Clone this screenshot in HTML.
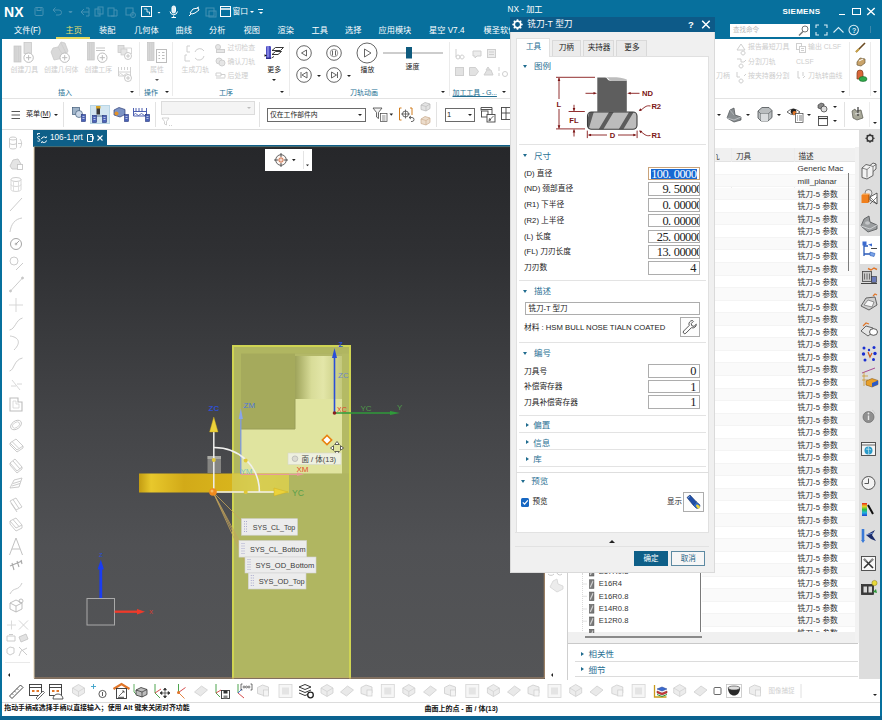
<!DOCTYPE html>
<html lang="zh-CN">
<head>
<meta charset="utf-8">
<title>NX - 加工</title>
<style>
*{box-sizing:border-box;margin:0;padding:0}
html,body{width:882px;height:720px;overflow:hidden;background:#07709d}
body{position:relative;font-family:"Liberation Sans","Noto Sans CJK SC",sans-serif;font-size:8px;color:#222;line-height:1}
.a{position:absolute}
.t{position:absolute;white-space:nowrap}
/* frame */
#titlebar{left:0;top:0;width:882px;height:39px;background:#07709d}
#ribbon{left:2px;top:39px;width:878px;height:59px;background:#fff}
#tb2{left:2px;top:98px;width:878px;height:32px;background:#fff;border-top:1px solid #e3e3e3}
#tabrow{left:2px;top:130px;width:878px;height:16px;background:#fff}
#leftbar{left:2px;top:146px;width:31px;height:534px;background:#fff}
#view{left:34px;top:146px;width:511px;height:532.500px;background:linear-gradient(180deg,#26272a 0%,#2f3033 20%,#434447 50%,#505154 75%,#545557 100%)}
#rpanel{left:546px;top:130px;width:313px;height:550px;background:#fff}
#rstrip{left:859px;top:130px;width:21px;height:548.500px;background:#dddddd}
#btb{left:2px;top:680px;width:878px;height:22px;background:#fff}
#status{left:2px;top:701.500px;width:878px;height:14px;background:#fff;border-top:1px solid #dcdcdc}
.menu{color:#fff;font-size:8.200px;top:26.500px}
.gl{color:#1b6a8c;font-size:8px;top:88px}
.dis{color:#c4c4c4}
</style>
</head>
<body>
<div class="a" id="titlebar"></div>
<div class="a" style="left:2px;top:39px;width:878px;height:677px;background:#fff"></div>
<div class="a" id="ribbon"></div>
<div class="a" id="tb2"></div>
<div class="a" id="tabrow"></div>
<div class="a" id="leftbar"></div>
<div class="a" id="view"></div>
<div class="a" id="rpanel"></div>
<div class="a" id="rstrip"></div>
<div class="a" id="btb"></div>
<div class="a" id="status"></div>

<!-- title bar -->
<div class="t" style="left:4px;top:5px;font-size:14px;font-weight:bold;color:#fff;letter-spacing:0.2px">NX</div>
<svg class="a" style="left:30px;top:4px" width="240" height="16" viewBox="0 0 240 16" fill="none" stroke="#4591b3" stroke-width="1">
 <rect x="5" y="3.5" width="8" height="8" rx="1"/><rect x="7" y="3.5" width="4" height="3"/>
 <path d="M23 6h6a2.5 2.500 0 0 1 0 5h-3M23 6l2.500-2.500M23 6l2.500 2.500"/>
 <path d="M39 7.500l1.500 1.500l1.500-1.500z" fill="#4f93b3"/>
 <path d="M52 8h7M54 5l-3 3l3 3M56 4h3v8h-3"/>
 <rect x="65" y="5" width="5" height="7"/><rect x="68" y="3" width="5" height="7"/>
 <rect x="78" y="4" width="6" height="8"/><path d="M84 6h3v6h-6"/>
 <rect x="96" y="4" width="7" height="7"/><circle cx="103" cy="11" r="2.500"/>
 <rect x="176" y="4" width="8" height="8"/><rect x="179" y="7" width="7" height="6"/>
</svg>
<svg class="a" style="left:140px;top:4px" width="130" height="16" viewBox="0 0 130 16" fill="none" stroke="#fff" stroke-width="1">
 <rect x="1.500" y="2.500" width="10" height="10"/><path d="M4 5h3v3M7 8h2.500v2.500" stroke-width="0.800"/>
 <path d="M17.500 8l1.500 1.600l1.500-1.600z" fill="#fff" stroke="none"/>
 <rect x="32" y="2" width="3.500" height="7" rx="1.700" fill="#dfeef5"/><path d="M30 7.500a3.800 3.800 0 0 0 7.500 0M33.700 11.500v2M31.500 13.500h4.500"/>
 <path d="M50 9l3-4l5-1l1 2l-4 3l-3 1zM51 10l-2 2M57 4l2-1" />
 <rect x="80.500" y="2.500" width="10" height="10"/><path d="M80.500 5h10" stroke-width="1.500"/>
</svg>
<div class="t" style="left:232.500px;top:8px;font-size:7.800px;color:#fff">窗口</div>
<div class="a" style="left:250px;top:11px;border:2px solid transparent;border-top:2.500px solid #fff"></div>
<div class="a" style="left:258px;top:9px;width:5px;height:1px;background:#fff"></div>
<div class="a" style="left:258.500px;top:11.500px;border:2px solid transparent;border-top:2.500px solid #fff"></div>
<div class="t" style="left:507.500px;top:6px;font-size:8.200px;color:#fff">NX - 加工</div>
<div class="t" style="left:782.500px;top:8px;font-size:8px;font-weight:bold;color:#fff;letter-spacing:0.250px">SIEMENS</div>
<div class="a" style="left:838.500px;top:13.500px;width:6px;height:1.200px;background:#fff"></div>
<div class="a" style="left:852px;top:8px;width:8.500px;height:7px;border:1.200px solid #fff;border-top-width:1.800px"></div>
<svg class="a" style="left:866px;top:7px" width="10" height="9" viewBox="0 0 10 9" stroke="#fff" stroke-width="1.400"><path d="M1.200 1l7.500 7M8.700 1l-7.500 7"/></svg>
<!-- menu -->
<div class="t menu" style="left:14px">文件(F)</div>
<div class="t menu" style="left:65.500px;color:#eadf6e">主页</div>
<div class="a" style="left:56px;top:37px;width:34px;height:1.500px;background:#e4d75c"></div>
<div class="t menu" style="left:99px">装配</div>
<div class="t menu" style="left:134px">几何体</div>
<div class="t menu" style="left:175.500px">曲线</div>
<div class="t menu" style="left:209px">分析</div>
<div class="t menu" style="left:243.500px">视图</div>
<div class="t menu" style="left:277.500px">渲染</div>
<div class="t menu" style="left:311.500px">工具</div>
<div class="t menu" style="left:345px">选择</div>
<div class="t menu" style="left:378.500px">应用模块</div>
<div class="t menu" style="left:429px">星空 V7.4</div>
<div class="t menu" style="left:483.500px">模圣软件</div>
<!-- search -->
<div class="a" style="left:730px;top:24px;width:80px;height:13px;background:#fff"></div>
<div class="t" style="left:733px;top:27px;font-size:6.500px;color:#b9b9b9">查找命令</div>
<svg class="a" style="left:797px;top:24px" width="13" height="13" viewBox="0 0 13 13" fill="none" stroke="#777" stroke-width="1"><circle cx="8" cy="5" r="3"/><path d="M6 7.500l-4 4" stroke-width="1.500"/></svg>
<svg class="a" style="left:814px;top:23px" width="50" height="14" viewBox="0 0 50 14" fill="none" stroke="#d9ecf4" stroke-width="1.100">
 <path d="M2 5v-3h3M10 2h3v3M13 9v3h-3M5 12h-3v-3"/>
 <path d="M19.500 9.500l5-5l5 5"/>
 <circle cx="39.700" cy="7" r="4.700"/>
</svg>
<div class="t" style="left:852px;top:26.500px;font-size:7px;color:#d9ecf4;font-weight:bold">?</div>
<div class="a" style="left:870px;top:26px;width:1px;height:7px;background:#3f88aa"></div>


<!-- ribbon -->
<style>
.rl{font-size:6.900px;color:#cdcdcd;top:66.800px}
.rs{font-size:6.900px;color:#cdcdcd;margin-top:0.300px}
.gl{font-size:7px;color:#236f92;top:89.200px}
.vs{width:1px;background:#ebebeb;top:42px;height:54px}
.dd{border:2px solid transparent;border-top:2.500px solid #222;width:0;height:0}
</style>
<svg class="a" style="left:2px;top:39px" width="878" height="59" viewBox="2 39 878 59" fill="none" stroke="#cfcfcf" stroke-width="1">
 <!-- 创建刀具 -->
 <rect x="14" y="46" width="7" height="16" fill="#d6d6d6" stroke="#c4c4c4" stroke-width="0.700"/><path d="M16 46v16M18.500 46v16" stroke="#c9c9c9" stroke-width="0.500"/><rect x="24" y="42.500" width="7.500" height="11" fill="#dedede" stroke="#c4c4c4" stroke-width="0.700"/><circle cx="28.600" cy="57.700" r="4.700" fill="#fff" stroke="#bdbdbd"/><path d="M26 57.700h5.200M28.600 55.100v5.200" stroke="#bdbdbd"/>
 <!-- 创建几何体 -->
 <path d="M51 52l2-4l5-1l3-5l4 1l3 8l-4 7l-10 2z" fill="#d9d9d9" stroke="#c6c6c6" stroke-width="0.700"/><path d="M58 47l6 10M61 43l5 10" stroke="#c9c9c9" stroke-width="0.600"/><circle cx="64.700" cy="57.700" r="4.700" fill="#fff" stroke="#bdbdbd"/><path d="M62.100 57.700h5.200M64.700 55.100v5.200" stroke="#bdbdbd"/>
 <!-- 创建工序 -->
 <rect x="87.500" y="42.500" width="6.700" height="17.500" fill="#d6d6d6" stroke="#c4c4c4" stroke-width="0.700"/><path d="M89.500 42.500v17.500M91.800 42.500v17.500" stroke="#c9c9c9" stroke-width="0.500"/><path d="M96 48h9M96 50.500h9" stroke="#c4c4c4"/><circle cx="102.300" cy="57.700" r="4.700" fill="#fff" stroke="#bdbdbd"/><path d="M99.700 57.700h5.200M102.300 55.100v5.200" stroke="#bdbdbd"/>
 <!-- small -->
 <rect x="118" y="45.500" width="6" height="7" fill="#e0e0e0" stroke="#c6c6c6" stroke-width="0.700"/><path d="M124 48h7.500v6" stroke="#c6c6c6" stroke-width="0.700"/><rect x="121" y="49" width="6" height="6" fill="#e6e6e6" stroke="#c6c6c6" stroke-width="0.600"/><circle cx="128" cy="56" r="3.500" fill="#fff" stroke="#bdbdbd" stroke-width="0.800"/><path d="M126 56h4M128 54v4" stroke="#bdbdbd" stroke-width="0.800"/>
 <path d="M118.500 67v9h12v-9M118.500 72h12M121.500 67v3M124.500 67v3M127.500 67v3" stroke="#c6c6c6" stroke-width="0.800"/><path d="M119 74.500q1.500-2 3 0t3 0t3 0" stroke="#c6c6c6" stroke-width="0.700"/><circle cx="128" cy="78" r="3.500" fill="#fff" stroke="#bdbdbd" stroke-width="0.800"/><path d="M126 78h4M128 76v4" stroke="#bdbdbd" stroke-width="0.800"/>
 <!-- 属性 -->
 <rect x="147.500" y="42.500" width="6.500" height="18" fill="#d6d6d6" stroke="#c4c4c4" stroke-width="0.700"/><path d="M149.500 42.500v18M151.800 42.500v18" stroke="#c9c9c9" stroke-width="0.500"/><rect x="156.500" y="49.500" width="10" height="13" fill="#fff" stroke="#bdbdbd"/><path d="M158.500 52.500h1.500M162 52.500h2.500M158.500 55.500h1.500M162 55.500h2.500M158.500 58.500h1.500M162 58.500h2.500" stroke="#bdbdbd"/>
 <!-- 生成刀轨 -->
 <path d="M190 46h-3v6h3M187 55h-2v6h5M195 52a5 5 0 0 1 9-1M204 56a5 5 0 0 1 -9 2"/>
 <!-- small gen icons -->
 <circle cx="218" cy="47" r="2.500" fill="#e6e6e6"/><rect x="216.500" y="49.500" width="8" height="3" fill="#e6e6e6"/>
 <circle cx="219" cy="61" r="3" fill="#e6e6e6"/><circle cx="222" cy="63" r="3" fill="#e6e6e6"/>
 <path d="M216 73h5v3h-5zM216 78h9M221 74.500h4v3"/>
 <!-- playback circles -->
 <g stroke="#555" stroke-width="0.900">
 <circle cx="304" cy="53" r="7.300"/><path d="M306.500 50l-5 3l5 3z"/>
 <circle cx="334" cy="53" r="7.300"/><path d="M332.500 50.500v5M335.500 50.500v5"/><circle cx="334" cy="53" r="3.800" stroke-width="0.600"/>
 <circle cx="367" cy="53" r="10"/><path d="M364.500 49l6.500 4l-6.500 4z"/>
 <circle cx="304" cy="75" r="7.300"/><path d="M307 72l-5 3l5 3zM301 72v6"/>
 <circle cx="334" cy="75" r="7.300"/><path d="M331.500 72l5 3l-5 3zM337.500 72v6"/>
 </g>
 <path d="M383 53h60" stroke="#bdbdbd" stroke-width="1.500"/>
 <rect x="406.500" y="47.500" width="5" height="10.500" fill="#0f5b7e" stroke="#0f5b7e"/>
 <!-- group5 disabled icons -->
 <path d="M456 49v8M456 57a2 2 0 1 0 4 0a2 2 0 1 0 -4 0M462 55a2 2 0 1 0 0.100 0"/>
 <path d="M473 51h8v5h-4l-2 2v-2h-2z" fill="#ececec"/>
 <rect x="487.500" y="49.500" width="8" height="8" fill="#ececec"/><path d="M489 52h5M489 54.500h5"/>
 <rect x="455.500" y="67.500" width="8" height="8" fill="#e2e2e2"/>
 <path d="M469.500 67.500h6l3 4l-3 4h-6z" fill="#e2e2e2"/>
 <path d="M484 75h9l-2-5h-4zM486 70l2-3l2 3" fill="#e2e2e2"/>
 <path d="M499 67v4M499 73v3"/><circle cx="505" cy="74" r="2.500"/>
 <!-- right groups -->
 <path d="M737 50l4-6l4 6zM743 51a2 2 0 1 0 0.100 0"/>
 <path d="M737 59h4v3h3M741 64a2 2 0 1 0 0.100 0M744 62l2-2"/>
 <path d="M737 72v5h3M741 79a2 2 0 1 0 0.100 0M744 76l2-2"/>
 <rect x="796.500" y="43.500" width="5" height="6"/><rect x="799.500" y="46.500" width="6" height="6" fill="#fff"/><path d="M801 48.500h3M801 50.500h3"/>
 <path d="M798 71v7M798 78h2M803 72v4M803 78l2-2"/>
</svg>
<div class="t rl" style="left:10.500px">创建刀具</div>
<div class="t rl" style="left:44px">创建几何体</div>
<div class="t rl" style="left:84.500px">创建工序</div>
<div class="t rl" style="left:150px">属性</div>
<div class="a dd" style="left:155px;top:78.500px;border-top-color:#555"></div>
<div class="t rl" style="left:181.500px">生成刀轨</div>
<div class="t rs" style="left:227.500px;top:45px">过切检查</div>
<div class="t rs" style="left:227.500px;top:58.500px">确认刀轨</div>
<div class="t rs" style="left:227.500px;top:72.500px">后处理</div>
<!-- 更多 icon -->
<svg class="a" style="left:264px;top:44px" width="22" height="19" viewBox="264 44 22 19">
 <rect x="266" y="46" width="5" height="13" rx="1.200" fill="#4c4cc0"/><rect x="267.200" y="46" width="1.600" height="13" fill="#8c8ce6"/><rect x="266" y="57.500" width="5" height="1.500" fill="#2c2c8a"/>
 <path d="M267 55.500l-2.500-1.200v2.400z" fill="#111"/>
 <path d="M283.500 47.500h-8l-3.500 3h8.500zM281.500 51.500h-6l-3.500 3h6z" fill="#fff" stroke="#222" stroke-width="0.900"/>
 <path d="M274 56.500l-2.500 1.500" stroke="#222" stroke-width="0.900"/>
</svg>
<div class="t" style="left:267.300px;top:66.800px;font-size:6.900px;color:#222">更多</div>
<div class="a dd" style="left:272px;top:79px"></div>
<div class="t" style="left:360.500px;top:66.800px;font-size:6.900px;color:#222">播放</div>
<div class="a dd" style="left:317px;top:74.500px"></div>
<div class="a dd" style="left:347px;top:74.500px"></div>
<div class="t" style="left:405.500px;top:62.800px;font-size:7px;color:#222">速度</div>
<!-- group labels -->
<div class="t gl" style="left:58px">插入</div><div class="a dd" style="left:130px;top:91px"></div>
<div class="t gl" style="left:144px">操作</div><div class="a dd" style="left:165px;top:91px"></div>
<div class="t gl" style="left:219px">工序</div><div class="a dd" style="left:280px;top:91px"></div>
<div class="t gl" style="left:350px">刀轨动画</div><div class="a dd" style="left:440.500px;top:91px"></div>
<div class="t gl" style="left:452.500px;text-decoration:underline;letter-spacing:-0.100px">加工工具 - G...</div><div class="a dd" style="left:502px;top:91px"></div>
<div class="a vs" style="left:139px"></div>
<div class="a vs" style="left:172px"></div>
<div class="a vs" style="left:289px"></div>
<div class="a vs" style="left:449px"></div>
<div class="a vs" style="left:849px"></div>
<div class="a vs" style="left:870px"></div>
<!-- right ribbon text -->
<div class="t rs" style="left:716px;top:72.500px">刀柄</div>
<div class="t rs" style="left:748px;top:43.500px">报告最短刀具</div>
<div class="t rs" style="left:748px;top:58.500px">分割刀轨</div>
<div class="t rs" style="left:748px;top:72.500px">按夹持器分割</div>
<div class="t rs" style="left:808px;top:43.500px">输出 CLSF</div>
<div class="t rs" style="left:796px;top:58.500px">CLSF</div>
<div class="t rs" style="left:808px;top:72.500px">刀轨转曲线</div>
<div class="a dd" style="left:840.500px;top:91px"></div>
<div class="a dd" style="left:872.500px;top:91px"></div>
<svg class="a" style="left:854px;top:41px" width="14" height="42" viewBox="0 0 14 42">
 <path d="M2 11l9-9" stroke="#6b4a22" stroke-width="1.600"/><path d="M2 11l3-3" stroke="#c8a24a" stroke-width="2"/>
 <path d="M3 21l3-4l5 1v4l-4 3l-4-1z" fill="#c9a36a" stroke="#6b5a3a" stroke-width="0.700"/><path d="M5 20l4-2" stroke="#fff" stroke-width="1"/>
 <path d="M3 32v6h6v-6a3 3 0 0 0-6 0z" fill="#d9673a" stroke="#7a3a1a" stroke-width="0.700"/><ellipse cx="9" cy="38" rx="4" ry="2.500" fill="#2fa84a" stroke="#146a26" stroke-width="0.600"/>
</svg>


<!-- toolbar 2 -->
<svg class="a" style="left:11px;top:110px" width="10" height="10" viewBox="0 0 10 10" stroke="#444" stroke-width="0.900"><path d="M0.500 1.500h8.500M0.500 5h8.500M0.500 8.500h8.500"/></svg>
<div class="t" style="left:26px;top:111.300px;font-size:7.100px;color:#222">菜单(<u>M</u>)</div>
<div class="a dd" style="left:54px;top:114px"></div>
<div class="a" style="left:63px;top:102px;width:1px;height:25px;background:#e2e2e2"></div>
<div class="a" style="left:89.500px;top:104.500px;width:20px;height:19.500px;background:#d3e6f1;border:1px solid #b9d6e6"></div>
<svg class="a" style="left:70px;top:104px" width="84" height="21" viewBox="70 104 84 21">
 <!-- icon1 -->
 <rect x="72.500" y="107.500" width="7" height="7" fill="#9fb3c8" stroke="#3f5a78" stroke-width="0.700"/><circle cx="79" cy="114" r="3.500" fill="#c9d6e6" stroke="#3f5a78" stroke-width="0.700"/><rect x="81.500" y="114.500" width="4" height="7" fill="#4a63b8" stroke="#26357a" stroke-width="0.600"/><path d="M82.500 116.500h2M82.500 118.500h2" stroke="#fff" stroke-width="0.600"/>
 <!-- icon2 -->
 <rect x="96.500" y="106.500" width="3.500" height="8" fill="#3a3a3a"/><rect x="96" y="106" width="4.500" height="2.500" fill="#d8a326"/><path d="M94 116h10" stroke="#3f5a78" stroke-width="0.800"/><rect x="92.500" y="115.500" width="4" height="7" fill="#4a63b8" stroke="#26357a" stroke-width="0.600"/><rect x="102.500" y="115.500" width="4" height="7" fill="#4a63b8" stroke="#26357a" stroke-width="0.600"/><path d="M93.500 117.500h2M93.500 119.500h2M103.500 117.500h2M103.500 119.500h2" stroke="#fff" stroke-width="0.600"/>
 <!-- icon3 -->
 <path d="M114 110l5-2.500l6 2v5l-5 2.500l-6-2z" fill="#7c93c4" stroke="#2f3f78" stroke-width="0.700"/><circle cx="116.500" cy="113.500" r="2" fill="#e0902a"/><rect x="124.500" y="114.500" width="4" height="7" fill="#4a63b8" stroke="#26357a" stroke-width="0.600"/><path d="M125.500 116.500h2M125.500 118.500h2" stroke="#fff" stroke-width="0.600"/>
 <!-- icon4 -->
 <path d="M133.500 108v8h13v-8M133.500 111.500h13M136 108v3.500M139 108v3.500M142 108v3.500" fill="none" stroke="#3a4fa8" stroke-width="0.900"/><path d="M134 114.500q1.500-2 3 0t3 0t3 0t3 0" fill="none" stroke="#3a4fa8" stroke-width="0.800"/><rect x="145.500" y="114.500" width="4" height="7" fill="#4a63b8" stroke="#26357a" stroke-width="0.600"/><path d="M146.500 116.500h2M146.500 118.500h2" stroke="#fff" stroke-width="0.600"/>
</svg>
<div class="a" style="left:155px;top:102px;width:1px;height:25px;background:#e2e2e2"></div>
<div class="a" style="left:161px;top:101px;width:94px;height:14px;background:#f4f4f4;border:1px solid #dcdcdc"></div>
<div class="a dd" style="left:247px;top:107px;border-top-color:#bbb"></div>
<svg class="a" style="left:161px;top:117px" width="12" height="11" viewBox="0 0 12 11" fill="none" stroke="#c8c8c8" stroke-width="0.800"><path d="M1 1h7l-2.500 3.500v3.500l-2-1v-2.500z"/><path d="M8 8.500h1M10 8.500h1"/></svg>
<div class="a" style="left:259px;top:102px;width:1px;height:25px;background:#e2e2e2"></div>
<div class="a" style="left:267px;top:108px;width:99px;height:14px;background:#fff;border:1px solid #6a6a6a"></div>
<div class="t" style="left:270px;top:111.500px;font-size:6.800px;color:#222">仅在工作部件内</div>
<div class="a dd" style="left:358px;top:114px"></div>
<svg class="a" style="left:372px;top:106px" width="46" height="18" viewBox="372 106 46 18" fill="none">
 <path d="M373 108h9l-3.500 4.500v6l-2-1.500v-4.500z" stroke="#444" stroke-width="0.800" fill="#f2f2f2"/>
 <rect x="380.500" y="113.500" width="6.500" height="8" fill="#fff" stroke="#444" stroke-width="0.700"/><path d="M382 116h3.500M382 118h3.500M382 120h3.500" stroke="#444" stroke-width="0.600"/>
 <path d="M389.500 113.500l1.800 2.200l1.800-2.200z" fill="#222"/>
 <path d="M401.500 108h-2v12h2M410 108h2v7" stroke="#d07a1a" stroke-width="1"/>
 <circle cx="405.500" cy="114" r="3" stroke="#444" stroke-width="0.800"/><path d="M405.500 109.500v9M401 114h9" stroke="#444" stroke-width="0.700"/>
 <path d="M409 117.500h3a2 2 0 0 1 0 4h-1M409 117.500l2-1.500M409 117.500l2 1.500" stroke="#444" stroke-width="0.800"/>
</svg>
<svg class="a" style="left:419px;top:101px" width="13" height="26" viewBox="0 0 13 26">
 <path d="M2 4l4-2.500l5 1.500v4.500l-4 2.500l-5-1.500z" fill="#e3e3e3" stroke="#b5b5b5" stroke-width="0.700"/><path d="M2 4l5 1.500l4-2.500M7 5.500v4.500" fill="none" stroke="#b5b5b5" stroke-width="0.600"/>
 <path d="M2 18l4-2.500l5 1.500v4.500l-4 2.500l-5-1.500z" fill="#ecdccb" stroke="#c9a98a" stroke-width="0.700"/><path d="M2 18l5 1.500l4-2.500M7 19.500v4.500" fill="none" stroke="#c9a98a" stroke-width="0.600"/>
</svg>
<div class="a" style="left:436px;top:102px;width:1px;height:25px;background:#e2e2e2"></div>
<div class="a" style="left:444.500px;top:108px;width:30px;height:13.500px;background:#fff;border:1px solid #6a6a6a"></div>
<div class="t" style="left:447px;top:111px;font-size:7.500px;color:#222">1</div>
<div class="a dd" style="left:467.500px;top:114px"></div>
<svg class="a" style="left:480px;top:106px" width="32" height="18" viewBox="480 106 32 18" fill="none" stroke="#444" stroke-width="0.900">
 <path d="M481 110.500v-3h11v8h-2M481 109.500h11"/><rect x="481.500" y="111" width="6.500" height="6"/><rect x="487" y="114.500" width="8" height="7.500" fill="#fff"/><path d="M489 120.500l4.500-4.500M489 120.500l0.500-2l1.500 1.500z" stroke-width="0.800"/>
 <rect x="501.500" y="107.500" width="9" height="12"/><path d="M501.500 113h9M506 107.500v12"/>
</svg>
<!-- right part of tb2 -->
<div class="a dd" style="left:717px;top:113.500px"></div>
<svg class="a" style="left:725px;top:105px" width="18" height="18" viewBox="0 0 18 18"><path d="M2 13l3-8l4-2l1 7l6 2v3l-7 2z" fill="#8a8f92" stroke="#4a4f52" stroke-width="0.700"/><path d="M2 13l7 2l7-3" fill="none" stroke="#c9cdd0" stroke-width="0.800"/><path d="M5 5l4 5" stroke="#c9cdd0" stroke-width="0.600"/></svg>
<div class="a dd" style="left:746px;top:113.500px"></div>
<svg class="a" style="left:756px;top:105px" width="18" height="18" viewBox="0 0 18 18"><path d="M2 6l4-3.500h7l3 3v7l-4 3.500h-7l-3-3z" fill="#b9bdbf" stroke="#4a4f52" stroke-width="0.800"/><path d="M2 6l3 3h7l4-3.500M5 9v7M12 9v7" fill="none" stroke="#5a5f62" stroke-width="0.700"/><path d="M5 9h7v7h-7z" fill="#d9dcde" stroke="none"/></svg>
<div class="a dd" style="left:777px;top:113.500px"></div>
<svg class="a" style="left:786px;top:105px" width="19" height="19" viewBox="0 0 19 19"><path d="M1 7q6-6 13 0q-6 5.500-13 0z" fill="#fff" stroke="#444" stroke-width="0.800"/><circle cx="7.500" cy="6.500" r="2.800" fill="#222"/><circle cx="8.500" cy="8" r="2" fill="#e0762a"/><rect x="9.500" y="8.500" width="7.500" height="9" fill="#fff" stroke="#444" stroke-width="0.700"/><path d="M11 11h1M13 11h3M11 13h1M13 13h3M11 15h1M13 15h3" stroke="#444" stroke-width="0.700"/></svg>
<div class="a dd" style="left:807px;top:113.500px"></div>
<svg class="a" style="left:816px;top:101px" width="13" height="26" viewBox="0 0 13 26"><path d="M2 4l3-2l3 1v3l-3 2l-3-1z" fill="#888" stroke="#333" stroke-width="0.600"/><circle cx="8" cy="8" r="3" fill="#ddd" stroke="#333" stroke-width="0.700"/><rect x="2.500" y="15.500" width="9" height="9" fill="#fff" stroke="#333" stroke-width="0.800"/><path d="M2.500 17.500h9" stroke="#333" stroke-width="1.200"/></svg>
<div class="a dd" style="left:832.500px;top:106px"></div>
<div class="a dd" style="left:832.500px;top:119.500px"></div>
<div class="a" style="left:844px;top:102px;width:1px;height:25px;background:#e2e2e2"></div>
<svg class="a" style="left:850px;top:106px" width="15" height="16" viewBox="0 0 15 16"><path d="M2 5l3-2l1 2l5-1l2 8l-6 2l-4-2z" fill="#a9a99a" stroke="#55554a" stroke-width="0.700"/><path d="M8 1v9" stroke="#444" stroke-width="1.300"/><path d="M5 8l5-1" stroke="#eee" stroke-width="0.800"/></svg>
<div class="a dd" style="left:872.500px;top:122px"></div>
<div class="a" style="left:869px;top:102px;width:1px;height:25px;background:#ececec"></div>
<div class="a" style="left:2px;top:129px;width:878px;height:1px;background:#dcdcdc"></div>


<!-- tab row -->
<div class="a" style="left:33px;top:130px;width:74px;height:16px;background:#0e5f88"></div>
<div class="a" style="left:33px;top:145px;width:513px;height:1.500px;background:#0e5f88"></div>
<svg class="a" style="left:35px;top:131px" width="13" height="14" viewBox="0 0 13 14" fill="none" stroke="#fff" stroke-width="0.900"><path d="M5 2.500h-2.500v1.500M5 5.500c-3-1-3 2-1 2.500s1 3-1.500 2"/><path d="M6.500 8a2.500 2.500 0 0 1 4.500-1l0.500-1.500M11.500 9.500a2.500 2.500 0 0 1-4.500 1l-0.500 1.500" stroke-width="1"/></svg>
<div class="t" style="left:50px;top:133.500px;font-size:8.200px;color:#fff">106-1.prt</div>
<svg class="a" style="left:86px;top:133px" width="18" height="10" viewBox="0 0 18 10" fill="none" stroke="#fff" stroke-width="1"><path d="M1.500 1.500h5v7h-5z"/><path d="M4 3.500h3.500v3" stroke-width="0.800"/><path d="M11.500 2.500l5 5M16.500 2.500l-5 5" stroke-width="1.100"/></svg>


<!-- left bar -->
<svg class="a" style="left:2px;top:130px" width="31" height="550" viewBox="2 130 31 550" fill="none" stroke="#c6c6c6" stroke-width="0.900">
 <ellipse cx="13" cy="138.500" rx="3.500" ry="1.500"/><path d="M9.500 138.500v9a3.500 1.500 0 0 0 7 0v-9M9.500 143a3.500 1.500 0 0 0 7 0"/><path d="M20 139a7 7 0 0 1 0 9M18 143.500h4" stroke-width="0.800"/>
 <path d="M10 166l3-6l5-1l3 5l-1 5h-8z" fill="#e4e4e4"/><rect x="17.500" y="164.500" width="5" height="5" fill="#fff"/>
 <ellipse cx="16" cy="179.500" rx="5" ry="2"/><path d="M11 179.500v10a5 2 0 0 0 10 0v-10M11 184.500a5 2 0 0 0 10 0" stroke="#d4d4d4"/><path d="M13.500 181v10M18.500 181v10" stroke="#dcdcdc"/>
 <path d="M10 211l12-13"/>
 <path d="M10 232c1-8 5-13 12-14"/>
 <circle cx="16" cy="244" r="5.500" stroke="#9a9a9a"/><circle cx="16" cy="244" r="1" fill="#9a9a9a"/><path d="M16 244l3-3" stroke="#9a9a9a"/>
 <circle cx="14" cy="261" r="4"/><path d="M16 270l7-7"/>
 <path d="M10.500 291l12-13"/><circle cx="10.500" cy="291" r="1" fill="#c6c6c6"/><circle cx="22.500" cy="278" r="1" fill="#c6c6c6"/>
 <path d="M16 298v14M9 305h14" stroke="#d2d2d2"/>
 <path d="M9.500 330c6-1 6-10 13-12"/>
 <path d="M10 336c8 1 12 6 4 14" />
 <path d="M9.500 371c5-1 4-11 13-13"/>
 <path d="M12 380l8 10M11 386h5M17 384h5" stroke="#d4d4d4"/>
 <path d="M10 398h8v4h4v9h-12z" stroke="#bdbdbd" stroke-width="1.100"/><path d="M13 401h3v3h3v4h-6z" stroke="#cfcfcf" stroke-width="0.700"/>
 <ellipse cx="16" cy="425" rx="6" ry="4" transform="rotate(-35 16 425)"/><ellipse cx="16" cy="425" rx="4" ry="2.500" transform="rotate(-35 16 425)" stroke="#d4d4d4"/>
 <path d="M10 443l6-4l7 7l-6 4zM12 441.500l7 7M10 443v2l7 7l6-4v-2"/>
 <path d="M10 463l5-4l7 8l-5 4zM10 463v2l7 8l5-4v-2M13 461l7 8"/>
 <path d="M10 488l4-8l8-2l-3 9zM12 486l8-2.500M13 483.500l8-2.500"/>
 <path d="M10 501l6-3l6 9l-6 3zM13 499.500l6 9M11 503l6 9"/>
 <path d="M10 521l6-3l6 7l-6 3zM10 521v3l6 7l6-3v-3M13 519.500l6 7"/>
 <path d="M9.500 555l6.500-17l6.500 17M12 549h8" stroke="#c2c2c2" stroke-width="1"/>
 <path d="M10 566l12-5M12 563l2 7M17 561l2 6M21 560l1 4" stroke="#a8a8a8" stroke-width="1.100"/>
 <path d="M10 594c4-8 8-2 12-11"/>
 <path d="M10 603l6-3l6 3v6l-6 3l-6-3zM10 603l6 3l6-3M16 606v6" stroke="#b8b8b8"/><circle cx="21" cy="601" r="2" stroke="#b8b8b8"/>
 <path d="M7 625h9M11.500 620.500v9" stroke="#d8d8d8"/><path d="M19 620.500l9 9M28 620.500l-9 9" stroke="#d0d0d0"/>
 <path d="M7 636h8v5h-8zM9 634.500h4" /><path d="M19 637l7-3l2 5l-7 3z" fill="#e2e2e2"/>
 <path d="M7 649l3-2l4 1v5l-4 2l-3-2z"/><path d="M19 647l8 8M27 648l-6 3l-2 5"/>
 <path d="M5 662.500h25" stroke="#e6e6e6"/>
</svg>
<div class="a" style="left:6px;top:672.500px;width:0;height:0;border:2.200px solid transparent;border-right:2.800px solid #222"></div>


<!-- viewport content -->
<svg class="a" style="left:33px;top:146px" width="513" height="534" viewBox="33 146 513 534" font-family="Liberation Sans, Noto Sans CJK SC, sans-serif">
 <defs>
  <linearGradient id="cyl" x1="0" x2="1" y1="0" y2="0"><stop offset="0" stop-color="#9ea35a"/><stop offset="0.350" stop-color="#d8dc98"/><stop offset="0.600" stop-color="#e3e6a8"/><stop offset="1" stop-color="#c3c87c"/></linearGradient>
  <linearGradient id="disc" x1="0" x2="1" y1="0" y2="0"><stop offset="0" stop-color="#c39c12"/><stop offset="0.080" stop-color="#e8c82c"/><stop offset="0.300" stop-color="#d2aa18"/><stop offset="0.620" stop-color="#d8b41c"/><stop offset="0.800" stop-color="#e6d440"/><stop offset="1" stop-color="#dccb3c"/></linearGradient>
 </defs>
 <!-- workpiece -->
 <rect x="232" y="345" width="119" height="333" fill="#b0b661"/>
 <path d="M233 678.500v-332.500h117v332.500" fill="none" stroke="#cfd453" stroke-width="2"/>
 <rect x="241" y="353.500" width="101" height="120" fill="#a5aa5c"/>
 <rect x="295" y="353.500" width="47" height="3" fill="#b3b868"/>
 <rect x="295" y="356" width="47" height="43" fill="url(#cyl)"/>
 <path d="M295 399h47v74.500h-101v-44.500h54z" fill="#e0e49f"/>
 <path d="M241 429h54v-30" fill="none" stroke="#999e58" stroke-width="1"/>
 <rect x="342" y="353.500" width="7" height="120" fill="#b8be68" opacity="0.500"/>
 <!-- cutter disc -->
 <rect x="139" y="473.500" width="150" height="19" fill="url(#disc)"/>
 <rect x="232" y="473.500" width="57" height="19" fill="#d4cc56" opacity="0.780"/>
 <rect x="207.500" y="456" width="13.500" height="17" fill="#9a9a94" opacity="0.750"/>
 <rect x="207.500" y="456" width="13.500" height="3" fill="#b8b8b0" opacity="0.700"/>
 <!-- leader lines -->
 <path d="M213 492l28 52M213 492l33 66M213 492l37 81M213 492l30 30" stroke="#c4a45c" stroke-width="0.800" fill="none"/>
 <!-- ZM / XM / YM -->
 <path d="M240.800 474v-58" stroke="#7f9be0" stroke-width="1.300"/><path d="M238.700 419l2.100-11l2.100 11z" fill="#8aa5ea"/>
 <path d="M241 474.300h58" stroke="#e79a9a" stroke-width="1.200"/><path d="M297 472.500l7 1.800l-7 1.800z" fill="#e79a9a"/>
 <text x="243.500" y="408" font-size="8" fill="#4f78dc">ZM</text>
 <text x="240.500" y="474" font-size="8" fill="#7fc6c0">YM</text>
 <text x="296.500" y="471.500" font-size="8" fill="#e0502a">XM</text>
 <text x="292" y="496" font-size="8.500" fill="#58a04a">YC</text>
 <!-- WCS ZC/YC -->
 <path d="M334.500 413v-58" stroke="#2a4fd8" stroke-width="1.600"/><path d="M332 358l2.500-10l2.500 10z" fill="#2a4fd8"/>
 <path d="M335 413h58" stroke="#2f9a3a" stroke-width="1.400"/><path d="M390 411l10 2l-10 2z" fill="#2f9a3a"/>
 <circle cx="334.500" cy="413" r="1.800" fill="#8a2020"/>
 <text x="338" y="378" font-size="8" fill="#6f88c8">ZC</text>
 <text x="338.500" y="346.500" font-size="7" fill="#2a4fd8" font-weight="bold">Z</text>
 <text x="337" y="412" font-size="7" fill="#e0402a">XC</text>
 <text x="360.500" y="411" font-size="8" fill="#4f9a4a">YC</text>
 <text x="397" y="410" font-size="8" fill="#4f9a4a">Y</text>
 <!-- manipulator -->
 <path d="M213.800 491.500v-60" stroke="#f0f0ee" stroke-width="1.500"/>
 <path d="M209.600 432l4.200-15l4.200 15z" fill="#ecd23a" stroke="#c9a91a" stroke-width="0.400"/>
 <path d="M213 492h62" stroke="#f0f0ee" stroke-width="1.500"/>
 <path d="M274 488l14 4l-14 4z" fill="#ecd23a" stroke="#c9a91a" stroke-width="0.400"/>
 <path d="M213.800 447.500c26 0 45.600 19 45.600 44.500" fill="none" stroke="#f0f0ee" stroke-width="1.600"/>
 <circle cx="213.800" cy="460" r="2" fill="#e2c838"/>
 <circle cx="245.700" cy="460.400" r="2" fill="#e2c838"/>
 <circle cx="245.700" cy="492" r="2" fill="#e2c838"/>
 <circle cx="213" cy="492" r="3.800" fill="#f08a1e"/><circle cx="212" cy="491" r="1.500" fill="#f8b860"/>
 <text x="208.500" y="411" font-size="8" fill="#2f4fd0" font-weight="bold">ZC</text>
 <!-- selection markers -->
 <rect x="323.700" y="436.700" width="6.600" height="6.600" transform="rotate(45 327 440)" fill="#fff" stroke="#e8820e" stroke-width="1.600"/>
 <g stroke="#222" stroke-width="0.700" fill="#fff"><path d="M337 441.500l2.300 3h-4.600zM337 454.500l2.300-3h-4.600zM330.500 448l3-2.300v4.600zM343.500 448l-3-2.300v4.600z"/></g>
 <!-- tooltip -->
 <rect x="288" y="453" width="53" height="11.500" fill="#eef0e0" stroke="#d6d8c8" stroke-width="0.600"/>
 <circle cx="295" cy="458.700" r="2.800" fill="#dcdcd2" stroke="#aaa" stroke-width="0.600"/>
 <text x="301.500" y="461.700" font-size="7.500" fill="#444">面 / 体(13)</text>
 <!-- SYS labels -->
 <g font-size="8" fill="#3a3a3a">
  <rect x="241.500" y="518.700" width="56" height="16.500" fill="#ececec" stroke="#d2d2d2" stroke-width="0.600"/><text x="252.800" y="530.200" textLength="42.500" lengthAdjust="spacingAndGlyphs">SYS_CL_Top</text>
  <rect x="239" y="540.600" width="67.600" height="16.500" fill="#ececec" stroke="#d2d2d2" stroke-width="0.600"/><text x="250" y="552.100" textLength="55.500" lengthAdjust="spacingAndGlyphs">SYS_CL_Bottom</text>
  <rect x="245" y="557" width="71" height="16" fill="#ececec" stroke="#d2d2d2" stroke-width="0.600"/><text x="255.400" y="568.200" textLength="59" lengthAdjust="spacingAndGlyphs">SYS_OD_Bottom</text>
  <rect x="248.300" y="573" width="57.700" height="16" fill="#ececec" stroke="#d2d2d2" stroke-width="0.600"/><text x="258.700" y="584.200" textLength="46" lengthAdjust="spacingAndGlyphs">SYS_OD_Top</text>
 </g>
 <g stroke="#9a9ac8" stroke-width="0.800" stroke-dasharray="1 1.500"><path d="M244.500 521v12M246.500 521v12M242 543v12M244 543v12M248 559v12M250 559v12M251.300 575v12M253.300 575v12"/></g>
 <!-- triad -->
 <rect x="87" y="598.500" width="27.500" height="26.500" fill="none" stroke="#a9a9a9" stroke-width="1"/>
 <path d="M100.800 598v-30" stroke="#1a3cf0" stroke-width="2.800"/><path d="M97.600 569.500l3.200-10l3.200 10z" fill="#1a3cf0"/>
 <path d="M114.600 611.700h25" stroke="#f03a2a" stroke-width="2.300"/><path d="M137 609l8 2.700l-8 2.700z" fill="#f03a2a"/>
 <text x="99" y="557" font-size="6" fill="#2a4fd8">Z</text>
 <text x="149" y="614" font-size="6" fill="#e03a2a">X</text>
 <!-- view widget -->
 <rect x="265" y="149" width="47" height="22" fill="#fff"/>
 <circle cx="281" cy="160" r="5.300" fill="#fdf6f2" stroke="#555" stroke-width="0.900"/><circle cx="281" cy="160" r="2.200" fill="#f3d6cc" stroke="#c8643a" stroke-width="0.900"/><path d="M281 153v4M281 163v4M274 160h4M284 160h4" stroke="#444" stroke-width="0.900"/>
 <path d="M292 159l1.800 2.200l1.800-2.200z" fill="#222"/>
 <path d="M303.500 151v18" stroke="#ddd" stroke-width="0.800"/>
 <path d="M306 164.500l1.500 1.800l1.500-1.800z" fill="#222"/>
 <!-- selection border of viewport -->
 <path d="M544.300 146.500v531.500M34 678h510.500" stroke="#d0a070" stroke-width="0.900" fill="none" opacity="0.800"/><path d="M34 146.500v532" stroke="#e6d3b0" stroke-width="1" fill="none"/><path d="M34 146.700h510" stroke="#8a7a5a" stroke-width="0.800" fill="none" opacity="0.700"/>
</svg>


<!-- right panel -->
<style>
.rw{left:702px;width:153px;height:12.550px;border-bottom:1px solid #f4f4f4}
.rw span{position:absolute;left:95.500px;top:3px;font-size:7.800px;color:#333;white-space:nowrap}
.trow{left:598.800px;font-size:7.600px;color:#333}
</style>
<div class="a" style="left:546px;top:130px;width:313px;height:550px;background:#fff"></div>
<div class="a" style="left:855px;top:147px;width:4px;height:496px;background:#f2f2f2"></div>
<div class="a" style="left:702px;top:147.500px;width:153px;height:14.500px;background:#f0f0f0;border-bottom:1px solid #e2e2e2"></div>
<div class="a" style="left:731.400px;top:147.500px;width:1px;height:486px;background:#ececec"></div>
<div class="a" style="left:793.900px;top:147.500px;width:1px;height:486px;background:#ececec"></div>
<div class="t" style="left:715.500px;top:152.500px;font-size:7.600px;color:#333;width:4px;overflow:hidden;direction:rtl">九</div>
<div class="t" style="left:736px;top:152.500px;font-size:7.600px;color:#333">刀具</div>
<div class="t" style="left:798.500px;top:152.500px;font-size:7.600px;color:#333">描述</div>
<div class="a rw" style="top:162.300px;background:#fff"><span style="font-size:8.100px;top:2.800px">Generic Mac</span></div>
<div class="a rw" style="top:174.900px;background:#fafafa"><span style="font-size:8.100px;top:2.800px">mill_planar</span></div>
<div class="a" style="left:702px;top:187px;width:153px;height:446px;overflow:hidden"><div class="a" style="left:-702px;top:-187px">
<div class="a rw" style="top:187.73px;background:#fafafa"><span>铣刀-5 参数</span></div>
<div class="a rw" style="top:200.28px;background:#ffffff"><span>铣刀-5 参数</span></div>
<div class="a rw" style="top:212.83px;background:#fafafa"><span>铣刀-5 参数</span></div>
<div class="a rw" style="top:225.38px;background:#ffffff"><span>铣刀-5 参数</span></div>
<div class="a rw" style="top:237.93px;background:#fafafa"><span>铣刀-5 参数</span></div>
<div class="a rw" style="top:250.48px;background:#ffffff"><span>铣刀-5 参数</span></div>
<div class="a rw" style="top:263.03px;background:#fafafa"><span>铣刀-5 参数</span></div>
<div class="a rw" style="top:275.58px;background:#ffffff"><span>铣刀-5 参数</span></div>
<div class="a rw" style="top:288.13px;background:#fafafa"><span>铣刀-5 参数</span></div>
<div class="a rw" style="top:300.68px;background:#ffffff"><span>铣刀-5 参数</span></div>
<div class="a rw" style="top:313.23px;background:#fafafa"><span>铣刀-5 参数</span></div>
<div class="a rw" style="top:325.78px;background:#ffffff"><span>铣刀-5 参数</span></div>
<div class="a rw" style="top:338.33px;background:#fafafa"><span>铣刀-5 参数</span></div>
<div class="a rw" style="top:350.88px;background:#ffffff"><span>铣刀-5 参数</span></div>
<div class="a rw" style="top:363.43px;background:#fafafa"><span>铣刀-5 参数</span></div>
<div class="a rw" style="top:375.98px;background:#ffffff"><span>铣刀-5 参数</span></div>
<div class="a rw" style="top:388.53px;background:#fafafa"><span>铣刀-5 参数</span></div>
<div class="a rw" style="top:401.08px;background:#ffffff"><span>铣刀-5 参数</span></div>
<div class="a rw" style="top:413.63px;background:#fafafa"><span>铣刀-5 参数</span></div>
<div class="a rw" style="top:426.18px;background:#ffffff"><span>铣刀-5 参数</span></div>
<div class="a rw" style="top:438.73px;background:#fafafa"><span>铣刀-5 参数</span></div>
<div class="a rw" style="top:451.28px;background:#ffffff"><span>铣刀-5 参数</span></div>
<div class="a rw" style="top:463.83px;background:#fafafa"><span>铣刀-5 参数</span></div>
<div class="a rw" style="top:476.38px;background:#ffffff"><span>铣刀-5 参数</span></div>
<div class="a rw" style="top:488.93px;background:#fafafa"><span>铣刀-5 参数</span></div>
<div class="a rw" style="top:501.48px;background:#ffffff"><span>铣刀-5 参数</span></div>
<div class="a rw" style="top:514.03px;background:#fafafa"><span>铣刀-5 参数</span></div>
<div class="a rw" style="top:526.58px;background:#ffffff"><span>铣刀-5 参数</span></div>
<div class="a rw" style="top:539.13px;background:#fafafa"><span>铣刀-5 参数</span></div>
<div class="a rw" style="top:551.68px;background:#ffffff"><span>铣刀-5 参数</span></div>
<div class="a rw" style="top:564.23px;background:#fafafa"><span>铣刀-5 参数</span></div>
<div class="a rw" style="top:576.78px;background:#ffffff"><span>铣刀-5 参数</span></div>
<div class="a rw" style="top:589.33px;background:#fafafa"><span>铣刀-5 参数</span></div>
<div class="a rw" style="top:601.88px;background:#ffffff"><span>铣刀-5 参数</span></div>
<div class="a rw" style="top:614.43px;background:#fafafa"><span>铣刀-5 参数</span></div>
<div class="a rw" style="top:626.98px;background:#ffffff"><span>铣刀-5 参数</span></div>

</div></div>
<div class="a" style="left:848.200px;top:173px;width:1.300px;height:98px;background:#7c7c7c"></div>
<!-- lower tree (below dialog) -->
<div class="a" style="left:567px;top:573px;width:1px;height:107px;background:#cfcfcf"></div>
<div class="a" style="left:568px;top:631.500px;width:287px;height:11px;background:#f0f0f0"></div>
<div class="a" style="left:568px;top:642.500px;width:290px;height:1px;background:#c9c9c9"></div>
<div class="a" style="left:700px;top:573px;width:1.300px;height:58.500px;background:#7a7a7a"></div>
<div class="a" style="left:585.300px;top:636.300px;width:117px;height:1.400px;background:#8a8a8a"></div>
<div class="a" style="left:581.500px;top:573px;width:0;height:58px;border-left:1px dotted #d9d9d9"></div>
<svg class="a" style="left:580px;top:573px" width="20" height="60" viewBox="580 573 20 60">
 <defs><g id="tl"><rect x="0.300" y="0" width="4.300" height="8.500" fill="#7a7a7a"/><path d="M0.900 7.500l3-6.500" stroke="#d0d0d0" stroke-width="1.200"/><rect x="0.300" y="0" width="4.300" height="8.500" fill="none" stroke="#505050" stroke-width="0.600"/></g></defs>
 <use href="#tl" x="589.300" y="567.500"/><use href="#tl" x="589.300" y="579.800"/><use href="#tl" x="589.300" y="592.100"/><use href="#tl" x="589.300" y="604.600"/><use href="#tl" x="589.300" y="617"/><use href="#tl" x="589.300" y="629.400"/>
 <path d="M582 584h5M582 596.300h5M582 609h5M582 621.200h5" stroke="#dcdcdc" stroke-width="0.800"/>
</svg>
<div class="a" style="left:598px;top:573px;width:60px;height:4.500px;overflow:hidden"><div class="t" style="left:0.800px;top:-4.800px;font-size:7.600px;color:#333">E17R0.8</div></div>
<div class="t trow" style="top:580.200px">E16R4</div>
<div class="t trow" style="top:592.500px">E16R0.8</div>
<div class="t trow" style="top:605.200px">E14R0.8</div>
<div class="t trow" style="top:617.400px">E12R0.8</div>
<div class="a arr" style="left:580.500px;top:651.800px"></div><div class="t sh" style="left:588.600px;top:650.200px">相关性</div>
<div class="a" style="left:575px;top:660.500px;width:283px;height:1px;background:#dcdcdc"></div>
<div class="a arr" style="left:580.500px;top:667px"></div><div class="t sh" style="left:588.600px;top:665.500px">细节</div>
<div class="a" style="left:575px;top:676.300px;width:283px;height:1px;background:#dcdcdc"></div>
<div class="a" style="left:548.500px;top:673px;width:0;height:0;border:2.200px solid transparent;border-right:2.800px solid #222"></div>
<svg class="a" style="left:547px;top:573px" width="18" height="26" viewBox="0 0 18 26" fill="#ececec" stroke="#d4d4d4" stroke-width="0.800"><path d="M3 14l3-6l4-2l1 5l5 2v3l-6 3z"/><path d="M1 1a4 4 0 0 0 6 0M10 0a3 3 0 0 0 5 1" fill="none" stroke="#bdbdbd"/></svg>


<!-- right strip icons -->
<div class="a" style="left:860px;top:236px;width:19.500px;height:28px;background:#fff"></div>
<svg class="a" style="left:859px;top:130px" width="21" height="550" viewBox="859 130 21 550" fill="none">
 <circle cx="870" cy="138.300" r="3" stroke="#333" stroke-width="1.400"/><g stroke="#333" stroke-width="1.300"><path d="M870 133.800v1.300M870 141.500v1.300M865.500 138.300h1.300M873.200 138.300h1.300M866.800 135.100l1 1M872.200 140.500l1 1M866.800 141.500l1-1M872.200 136.100l1-1"/></g>
 <!-- cube -->
 <path d="M862 168l4-3.500l4 1l3-2.500l3 1v5l-3 2.500v4l-6 3.500l-5-1.500z" fill="#f2f2f2" stroke="#555" stroke-width="0.900"/><path d="M862 168l5 1.500l3-2.500M867 169.500v8M870 165.500l3 1l3-2M873 166.500v5" stroke="#555" stroke-width="0.700"/>
 <!-- orange cube + valve -->
 <circle cx="868.500" cy="193" r="3.500" fill="#e8e8e8" stroke="#555" stroke-width="0.700"/><path d="M861.500 195h6.500v8h-6.500z" fill="#f0801e"/><path d="M861.500 195l1.500-1.500h6.500l-1.500 1.500" fill="#f8a04a"/><path d="M868 195l1.500-1.500v8l-1.500 1.500" fill="#c8640e"/><path d="M870 197l7-4v11l-7-4z" fill="#fff" stroke="#333" stroke-width="0.800"/><path d="M870 197l7 7M870 204l7-7" stroke="#333" stroke-width="0.600"/>
 <!-- grey shape -->
 <path d="M861 226l3-7l5-3l1 6l7 3v4l-9 3z" fill="#9a9d9f" stroke="#4f5254" stroke-width="0.800"/><path d="M861 226l9 3l7-4" stroke="#d4d6d8" stroke-width="0.900"/><path d="M865 223a2.500 1.800 0 1 0 5 0a2.500 1.800 0 1 0-5 0" fill="#c4c6c8"/>
 <!-- active: op navigator -->
 <path d="M864 243v13M864 246h4M864 254h6" stroke="#2a5ab8" stroke-width="1.300"/><rect x="862.500" y="241.500" width="4" height="4" fill="#3a6ad0"/><path d="M868 244.500l4-1v3z" fill="#3a6ad0"/><path d="M871 248.500h6" stroke="#333" stroke-width="0.900"/><path d="M870 252l5 1.500l-1 3l-4-1z" fill="#7aa4e8" stroke="#2a5ab8" stroke-width="0.600"/>
 <!-- machine tool -->
 <rect x="862.500" y="271.500" width="9" height="10" fill="#c8c8c8" stroke="#444" stroke-width="0.800"/><path d="M864.500 273.500v6M867 273.500v6M869.500 273.500v6" stroke="#555" stroke-width="0.800"/><rect x="871.500" y="276.500" width="5" height="6" fill="#6a7ab8" stroke="#333" stroke-width="0.600"/><path d="M868 268.500l3 1.500l3-2l3 1.500" stroke="#e0762a" stroke-width="1.400"/><path d="M861 283.500h16" stroke="#444" stroke-width="1"/>
 <!-- assembly 1 -->
 <path d="M861 306l5-8l9-1l2 8l-8 5z" fill="#cfcfcf" stroke="#444" stroke-width="0.800"/><path d="M864 305l4-5l6 2l-2 5z" fill="#f6f6f6" stroke="#555" stroke-width="0.600"/><path d="M873 296l2-2l2 1" stroke="#e0762a" stroke-width="1.200"/>
 <!-- assembly 2 -->
 <path d="M861 331l5-5l7 2v4l-5 4z" fill="#e6e6e6" stroke="#444" stroke-width="0.800"/><ellipse cx="873.500" cy="332" rx="4" ry="3.300" fill="#fff" stroke="#333" stroke-width="0.800"/><path d="M863 326l3-3l3 1" stroke="#e0762a" stroke-width="1.200"/>
 <!-- blue dots -->
 <g fill="#1a2fd0"><circle cx="864" cy="348" r="1.500"/><circle cx="863.500" cy="354" r="1.700"/><circle cx="865" cy="360" r="1.500"/><circle cx="874" cy="347.500" r="1.500"/><circle cx="875" cy="353.500" r="1.700"/><circle cx="873.500" cy="359.500" r="1.500"/><circle cx="869" cy="350" r="1.200"/></g><path d="M868 352l2 5l2-4" stroke="#d05a1a" stroke-width="1.200"/>
 <!-- chart -->
 <path d="M862 373l13-5" stroke="#a03a8a" stroke-width="0.900"/><path d="M864 372v14M862 376h6M862 380h6" stroke="#c8901a" stroke-width="0.700"/><path d="M866 381l6-2.500l6 2v4l-6 2.500l-6-2z" fill="#e8a02a" stroke="#7a4a0a" stroke-width="0.500"/><path d="M872 383l6-2.500v4l-6 2.500z" fill="#2a5ac8"/>
 <!-- info -->
 <circle cx="868.500" cy="417" r="5.500" fill="#8f8f8f" stroke="#6a6a6a" stroke-width="0.700"/><path d="M868.500 415.500v4.500" stroke="#e8e8e8" stroke-width="1.400"/><circle cx="868.500" cy="413.500" r="0.900" fill="#e8e8e8"/><path d="M872 410a5 5 0 0 1 3 4" stroke="#c8c8c8" stroke-width="0.900"/>
 <!-- web -->
 <rect x="861.500" y="442.500" width="14" height="13" fill="#f4f4f4" stroke="#444" stroke-width="0.900"/><path d="M861.500 445h14" stroke="#444" stroke-width="0.800"/><circle cx="868.500" cy="450.500" r="4" fill="#2a9ac8"/><path d="M866 449c2 1 3-1 5 1M868.500 446.500c-1 3 1 5 0 8" stroke="#d8f0f8" stroke-width="0.700"/>
 <!-- clock -->
 <circle cx="868.500" cy="483" r="6.500" fill="#f2f2f2" stroke="#444" stroke-width="0.900"/><path d="M868.500 478.500v5h-4" stroke="#444" stroke-width="0.900"/>
 <!-- colours -->
 <defs><linearGradient id="rb" x1="0" x2="0" y1="0" y2="1"><stop offset="0" stop-color="#e8201a"/><stop offset="0.250" stop-color="#f0d020"/><stop offset="0.500" stop-color="#30c040"/><stop offset="0.750" stop-color="#20b0e0"/><stop offset="1" stop-color="#2040d0"/></linearGradient></defs>
 <rect x="862" y="503" width="5" height="13" fill="url(#rb)"/><path d="M868 505l5 9" stroke="#111" stroke-width="2"/>
 <!-- K -->
 <path d="M863 529v11" stroke="#3a7ad8" stroke-width="2.600"/><path d="M861 540l2 3l2-3z" fill="#3a7ad8"/><path d="M866 535l9-5l-3 5l4 6l-5-2z" fill="#1a2a6a"/><path d="M866 535l7-2" stroke="#8ab0f0" stroke-width="0.800"/>
 <!-- tools -->
 <rect x="861.500" y="556.500" width="14" height="14" fill="#f8f8f8" stroke="#444" stroke-width="0.900"/><path d="M864 559l9 9M873 559l-9 9" stroke="#333" stroke-width="1.600"/><path d="M864 559l2.500 2.500M873 559l-2.500 2.500" stroke="#888" stroke-width="2.400"/>
 <!-- film -->
 <rect x="861.500" y="584.500" width="12" height="10" fill="#3a3a3a" stroke="#222" stroke-width="0.700"/><rect x="863.500" y="586.500" width="3.500" height="6" fill="#d8d8d8"/><rect x="868.500" y="586.500" width="3.500" height="6" fill="#d8d8d8"/><circle cx="874.500" cy="583" r="2.600" fill="#e8d83a" stroke="#8a7a1a" stroke-width="0.500"/><path d="M873 592l3-3l1 4z" fill="#2f9a3a"/>
</svg>


<!-- bottom toolbar -->
<svg class="a" style="left:2px;top:680px" width="878" height="22" viewBox="2 680 878 22" fill="none">
 <path d="M72.5 688l6-3.500l6 3.500v5l-6 3.500l-6-3.500z" fill="#ececec" stroke="#cfcfcf" stroke-width="0.800"/><path d="M72.5 688l6 3.500l6-3.500M78.5 691.500v5" fill="none" stroke="#cfcfcf" stroke-width="0.700"/><path d="M194.5 692l7-6l6 4l-7 6z" fill="#e9e9e9" stroke="#cfcfcf" stroke-width="0.800"/><path d="M257.5 687.500l5-2.500l6 2v6l-5 2.500l-6-2z" fill="#ededed" stroke="#cdcdcd" stroke-width="0.800"/><rect x="263.5" y="690" width="5" height="6" fill="#f4f4f4" stroke="#cdcdcd" stroke-width="0.700"/><rect x="279.0" y="684.500" width="13" height="13" fill="#f6f6f6" stroke="#d6d6d6" stroke-width="0.800"/><rect x="282.0" y="687.500" width="7" height="7" fill="#e4e4e4"/><path d="M321.0 688l6-3.500l6 3.500v5l-6 3.500l-6-3.500z" fill="#ececec" stroke="#cfcfcf" stroke-width="0.800"/><path d="M321.0 688l6 3.500l6-3.500M327.0 691.500v5" fill="none" stroke="#cfcfcf" stroke-width="0.700"/><path d="M340.5 692l7-6l6 4l-7 6z" fill="#e9e9e9" stroke="#cfcfcf" stroke-width="0.800"/><path d="M361.0 687.500l5-2.500l6 2v6l-5 2.500l-6-2z" fill="#ededed" stroke="#cdcdcd" stroke-width="0.800"/><rect x="367.0" y="690" width="5" height="6" fill="#f4f4f4" stroke="#cdcdcd" stroke-width="0.700"/><rect x="381.3" y="684.500" width="13" height="13" fill="#f6f6f6" stroke="#d6d6d6" stroke-width="0.800"/><rect x="384.3" y="687.500" width="7" height="7" fill="#e4e4e4"/><path d="M402.8 688l6-3.500l6 3.500v5l-6 3.500l-6-3.500z" fill="#ececec" stroke="#cfcfcf" stroke-width="0.800"/><path d="M402.8 688l6 3.500l6-3.500M408.8 691.500v5" fill="none" stroke="#cfcfcf" stroke-width="0.700"/><path d="M423.5 692l7-6l6 4l-7 6z" fill="#e9e9e9" stroke="#cfcfcf" stroke-width="0.800"/><path d="M444.5 687.500l5-2.500l6 2v6l-5 2.500l-6-2z" fill="#ededed" stroke="#cdcdcd" stroke-width="0.800"/><rect x="450.5" y="690" width="5" height="6" fill="#f4f4f4" stroke="#cdcdcd" stroke-width="0.700"/><rect x="465.8" y="684.500" width="13" height="13" fill="#f6f6f6" stroke="#d6d6d6" stroke-width="0.800"/><rect x="468.8" y="687.500" width="7" height="7" fill="#e4e4e4"/><path d="M487.4 688l6-3.500l6 3.500v5l-6 3.500l-6-3.500z" fill="#ececec" stroke="#cfcfcf" stroke-width="0.800"/><path d="M487.4 688l6 3.500l6-3.500M493.4 691.500v5" fill="none" stroke="#cfcfcf" stroke-width="0.700"/><path d="M507.5 692l7-6l6 4l-7 6z" fill="#e9e9e9" stroke="#cfcfcf" stroke-width="0.800"/><path d="M528.0 687.500l5-2.500l6 2v6l-5 2.500l-6-2z" fill="#ededed" stroke="#cdcdcd" stroke-width="0.800"/><rect x="534.0" y="690" width="5" height="6" fill="#f4f4f4" stroke="#cdcdcd" stroke-width="0.700"/><rect x="548.0" y="684.500" width="13" height="13" fill="#f6f6f6" stroke="#d6d6d6" stroke-width="0.800"/><rect x="551.0" y="687.500" width="7" height="7" fill="#e4e4e4"/><path d="M569.7 688l6-3.500l6 3.500v5l-6 3.500l-6-3.500z" fill="#ececec" stroke="#cfcfcf" stroke-width="0.800"/><path d="M569.7 688l6 3.500l6-3.500M575.7 691.500v5" fill="none" stroke="#cfcfcf" stroke-width="0.700"/><path d="M590.0 692l7-6l6 4l-7 6z" fill="#e9e9e9" stroke="#cfcfcf" stroke-width="0.800"/><path d="M611.8 687.500l5-2.500l6 2v6l-5 2.500l-6-2z" fill="#ededed" stroke="#cdcdcd" stroke-width="0.800"/><rect x="617.8" y="690" width="5" height="6" fill="#f4f4f4" stroke="#cdcdcd" stroke-width="0.700"/><rect x="632.1" y="684.500" width="13" height="13" fill="#f6f6f6" stroke="#d6d6d6" stroke-width="0.800"/><rect x="635.1" y="687.500" width="7" height="7" fill="#e4e4e4"/><path d="M673.7 688l6-3.500l6 3.500v5l-6 3.500l-6-3.500z" fill="#ececec" stroke="#cfcfcf" stroke-width="0.800"/><path d="M673.7 688l6 3.500l6-3.500M679.7 691.500v5" fill="none" stroke="#cfcfcf" stroke-width="0.700"/><path d="M694.0 692l7-6l6 4l-7 6z" fill="#e9e9e9" stroke="#cfcfcf" stroke-width="0.800"/><path d="M749.5 687.500l5-2.500l6 2v6l-5 2.500l-6-2z" fill="#ededed" stroke="#cdcdcd" stroke-width="0.800"/><rect x="755.5" y="690" width="5" height="6" fill="#f4f4f4" stroke="#cdcdcd" stroke-width="0.700"/>
 <!-- ruler -->
 <path d="M9.500 696l11-11l2.500 2.500l-11 11z" fill="#fff" stroke="#333" stroke-width="0.900"/><path d="M12 693.500l1.500 1.500M14.500 691l1.500 1.500M17 688.500l1.500 1.500" stroke="#333" stroke-width="0.600"/>
 <!-- cal 1 -->
 <rect x="29.500" y="684.500" width="12" height="11" fill="#fff" stroke="#333" stroke-width="0.900"/><path d="M29.500 687.500h12" stroke="#333" stroke-width="0.900"/><path d="M32 691h2.500M36.500 691h2.500" stroke="#e0762a" stroke-width="1.800"/><path d="M36 698l7-7l1.500 1.500l-7 7z" fill="#fff" stroke="#333" stroke-width="0.700"/>
 <!-- cal 2 -->
 <rect x="49.500" y="684.500" width="12" height="11" fill="#fff" stroke="#333" stroke-width="0.900"/><path d="M49.500 687.500h12" stroke="#333" stroke-width="0.900"/><path d="M52 691h2.500M56.500 691h2.500" stroke="#e0762a" stroke-width="1.800"/><path d="M53 699a5 5 0 0 1 10 0z" fill="#fff" stroke="#333" stroke-width="0.800"/>
 <!-- + i -->
 <path d="M93.500 684v5M91 686.500h5" stroke="#3aa0c8" stroke-width="0.900"/><circle cx="102.500" cy="694" r="3.600" stroke="#333" stroke-width="0.800"/><path d="M102.500 692v4" stroke="#333" stroke-width="0.800"/>
 <!-- orange home doc -->
 <path d="M113.500 689l8-5l8 5" stroke="#e0762a" stroke-width="2.200"/><rect x="116.500" y="688.500" width="10" height="10" fill="#fff" stroke="#333" stroke-width="0.900"/><path d="M119 696l5-5M122 691h2v2" stroke="#333" stroke-width="0.700"/><path d="M118 697.300h6" stroke="#333" stroke-width="0.900"/>
 <!-- cube axes -->
 <path d="M134 684v8l4 4" stroke="#3a9a3a" stroke-width="0.800"/><path d="M136 690l5-2.500l6 2v5l-5 2.500l-6-2z" fill="#bdbdbd" stroke="#333" stroke-width="0.800"/><path d="M136 690l6 2l5-2.500M142 692v5" stroke="#333" stroke-width="0.700"/>
 <!-- axes move -->
 <path d="M155 684v9l5 5" stroke="#3a9a3a" stroke-width="0.900"/><path d="M155 693l6-4" stroke="#d03a3a" stroke-width="0.900"/><path d="M165 688v10M160 693h10M165 688l-1.500 2h3zM165 698l-1.500-2h3zM160 693l2-1.500v3zM170 693l-2-1.500v3z" stroke="#333" stroke-width="0.700" fill="#333"/>
 <!-- axes orange -->
 <path d="M178.500 684v8.500" stroke="#3a9a3a" stroke-width="0.900"/><path d="M178.500 692.500l7-5" stroke="#d03a3a" stroke-width="0.900"/><path d="M178.500 692.500l6 6" stroke="#e0762a" stroke-width="0.900"/><circle cx="178.500" cy="692.500" r="1.500" fill="#e0762a"/>
 <!-- axes save -->
 <path d="M216 684v9l4 4" stroke="#3a9a3a" stroke-width="0.900"/><path d="M216 693l5-3" stroke="#d03a3a" stroke-width="0.900"/><rect x="221.500" y="690.500" width="8" height="8" fill="#fff" stroke="#333" stroke-width="0.900"/><rect x="223.500" y="690.500" width="4" height="3" fill="#333"/><rect x="223.500" y="695.500" width="4" height="3" fill="#888"/>
 <!-- axes [ooo] -->
 <path d="M238 684v9" stroke="#3a9a3a" stroke-width="0.900"/><path d="M238 693l6 5" stroke="#d03a3a" stroke-width="0.900"/><path d="M238 693l4-4" stroke="#3a6ad0" stroke-width="0.900"/><path d="M242.500 684h-1.500v6h1.500M250.500 684h1.500v6h-1.500" stroke="#333" stroke-width="0.700"/><circle cx="244" cy="687" r="1" stroke="#333" stroke-width="0.600"/><circle cx="246.500" cy="687" r="1" stroke="#333" stroke-width="0.600"/><circle cx="249" cy="687" r="1" stroke="#333" stroke-width="0.600"/>
 <!-- layered gear (enabled) -->
 <path d="M299 687l6-2.500l6 2.500l-6 2.500z" fill="#fff" stroke="#222" stroke-width="0.900"/><path d="M299 690l6 2.500l6-2.500M299 693l6 2.500l3-1.200" stroke="#222" stroke-width="0.900"/><circle cx="310.500" cy="695" r="2.800" fill="#fff" stroke="#222" stroke-width="1.300"/>
 <!-- colour layers icon -->
 <path d="M654.500 685v12h12" stroke="#c89a1a" stroke-width="1.300"/><path d="M657 689l5-2l5 2l-5 2z" fill="#3a6ad0" stroke="#1a3a8a" stroke-width="0.500"/><path d="M657 691l5 2l5-2v2l-5 2l-5-2z" fill="#d03a3a" stroke="#7a1a1a" stroke-width="0.500"/><path d="M657 694.500l5 2l5-2" stroke="#2f9a3a" stroke-width="1"/>
 <!-- checkbox + bowl -->
 <rect x="714" y="687.500" width="7" height="7" rx="1" fill="#fff" stroke="#444" stroke-width="0.800"/>
 <rect x="726.500" y="684.500" width="15" height="13" fill="#fff" stroke="#bbb" stroke-width="0.700"/><path d="M728 688c0 10 12 10 12 0z" fill="#2a2a2a"/><ellipse cx="734" cy="688" rx="6" ry="2" fill="#ddd" stroke="#333" stroke-width="0.600"/>
 <path d="M801 684v14" stroke="#e0e0e0" stroke-width="1"/>
</svg>
<div class="t" style="left:768.500px;top:688px;font-size:6.500px;color:#cfcfcf">图像捕捉</div>
<div class="a dd" style="left:872.500px;top:694px"></div>


<!-- status -->
<div class="a" style="left:0;top:715.700px;width:882px;height:4.300px;background:#0b6390"></div>
<div class="t" style="left:4.300px;top:705px;font-size:6.900px;color:#111;font-weight:bold">拖动手柄或选择手柄以直接输入；使用 Alt 键来关闭对齐功能</div>
<div class="t" style="left:424.400px;top:705px;font-size:7px;color:#111;font-weight:bold">曲面上的点 - 面 / 体(13)</div>


<!-- dialog -->
<style>
#dlg{left:509.500px;top:17px;width:205.500px;height:556px;background:#f0f0f0;border:1px solid #dadada;border-top:none}
.sh{font-size:8.500px;color:#2a7194}
.lb{font-size:7.700px;color:#222;left:524px}
.ib{left:648.300px;width:51.500px;height:13.600px;background:#fff;border:1px solid #adadad;overflow:hidden}
.num{position:absolute;top:0.100px;right:-3.200px;font-family:"Liberation Serif",serif;font-size:12.400px;letter-spacing:-0.550px;color:#222;white-space:nowrap;line-height:12px}
.num i{display:inline-block;width:5.650px;font-style:normal;text-align:left}
.numi{position:absolute;top:0.100px;right:2.400px;font-family:"Liberation Serif",serif;font-size:12.400px;color:#222;line-height:12px}
.sep{height:1px;background:#e3e3e3;left:518.500px;width:187px}
.ar{width:0;height:0;border:2.800px solid transparent;border-top:3.400px solid #1f6b8e}
.arr{width:0;height:0;border:2.800px solid transparent;border-left:3.400px solid #1f6b8e}
</style>
<div class="a" id="dlg"></div>
<div class="a" style="left:509.500px;top:17px;width:205.500px;height:15px;background:#0d5a88"></div>
<svg class="a" style="left:512px;top:19px" width="11" height="11" viewBox="0 0 11 11"><circle cx="5.500" cy="5.500" r="3.300" fill="none" stroke="#fff" stroke-width="1.700"/><g stroke="#fff" stroke-width="1.600"><path d="M5.500 0.300v1.700M5.500 9v1.700M0.300 5.500h1.700M9 5.500h1.700M1.800 1.800l1.200 1.200M8 8l1.200 1.200M1.800 9.200l1.200-1.200M8 3l1.200-1.200"/></g></svg>
<div class="t" style="left:527.300px;top:20.300px;font-size:8.700px;color:#fff">铣刀-T 型刀</div>
<div class="t" style="left:688px;top:19.500px;font-size:9.500px;color:#fff;font-weight:bold">?</div>
<svg class="a" style="left:701px;top:20px" width="10" height="9" viewBox="0 0 10 9" stroke="#fff" stroke-width="1.500"><path d="M1.200 0.800l7.500 7.500M8.700 0.800l-7.500 7.500"/></svg>
<!-- tabs -->
<div class="a" style="left:551.500px;top:39.500px;width:29.500px;height:17px;background:#ebebeb;border:1px solid #d9d9d9"></div>
<div class="a" style="left:582.500px;top:39.500px;width:31.500px;height:17px;background:#ebebeb;border:1px solid #d9d9d9"></div>
<div class="a" style="left:615.500px;top:39.500px;width:31.500px;height:17px;background:#ebebeb;border:1px solid #d9d9d9"></div>
<div class="a" style="left:515.500px;top:56px;width:193.500px;height:475.500px;background:#fff;border:1px solid #e0e0e0;border-bottom:none"></div>
<div class="a" style="left:515.500px;top:37.500px;width:34.500px;height:19.500px;background:#fff;border:1px solid #e0e0e0;border-bottom:none"></div>
<div class="t" style="left:526px;top:43px;font-size:7.600px;color:#2a7194">工具</div>
<div class="t" style="left:558.700px;top:43.500px;font-size:7.600px;color:#222">刀柄</div>
<div class="t" style="left:587.700px;top:43.500px;font-size:7.600px;color:#222">夹持器</div>
<div class="t" style="left:624.300px;top:43.500px;font-size:7.600px;color:#222">更多</div>
<!-- 图例 -->
<div class="a ar" style="left:523px;top:64.500px"></div>
<div class="t sh" style="left:534px;top:62px">图例</div>
<svg class="a" style="left:545px;top:68px" width="130" height="78" viewBox="545 68 130 78" font-family="Liberation Sans, sans-serif" font-weight="bold" font-size="7.600" fill="#7a1414">
 <defs><clipPath id="hd"><rect x="587.500" y="112" width="49.500" height="17.300" rx="4"/></clipPath></defs>
 <path d="M597.300 77.600h8c2 0 2 3.200 5 3.200h16.500v31h-29.500z" fill="#5e5e5e"/>
 <path d="M605.300 77.600c4 0 3 3.400 7 3.400h14.500v-1.500c-5-2.500-15-2.500-21.500-1.900z" fill="#bdbdbd"/>
 <rect x="587.500" y="112" width="49.500" height="17.300" rx="4" fill="#bcbcbc"/>
 <g clip-path="url(#hd)" stroke="#5c5c5c" stroke-width="4"><path d="M586 131l6-20M600 131l12-20M620 131l12-20"/></g>
 <rect x="587.500" y="112" width="49.500" height="17.300" rx="4" fill="none" stroke="#3c3c3c" stroke-width="1.100"/>
 <g stroke="#861818" stroke-width="0.900" fill="none">
  <path d="M556 77.300h39M559 78v21M559 109v19.500M556 128.900h29M568.600 111.500h16.200M574 104.800v6M574 136.500v-7M585.500 93.300h9M639.500 93.300h-10M587.300 130.600v7.500M637.100 130.600v7.500M589 135h18M618 135h17"/>
  <path d="M650.500 106c-5-1-6 2-10.500 4.500M650.500 135.500c-5 1-6-1.500-10.500-4.500"/>
 </g>
 <g fill="#7a1414" stroke="none"><path d="M559 77.500l-1.300 3.500h2.600zM559 128.700l-1.300-3.500h2.600zM574 111.300l-1.300-3.300h2.600zM574 129.200l-1.300 3.300h2.600zM597 93.300l-3.500-1.300v2.600zM627.200 93.300l3.500-1.300v2.600zM587.600 135l3.500-1.300v2.600zM636.800 135l-3.500-1.300v2.600zM638.800 111l3.200-0.600l-1.800-2.200zM639 130.400l1.600 2.800l1.700-2.300z"/></g>
 <text x="556.500" y="106.800">L</text>
 <text x="569.300" y="123">FL</text>
 <text x="642" y="96">ND</text>
 <text x="651.400" y="109">R2</text>
 <text x="651.400" y="138.200">R1</text>
 <text x="609.800" y="137.800">D</text>
</svg>
<div class="a sep" style="top:144px"></div>
<!-- 尺寸 -->
<div class="a ar" style="left:523px;top:154px"></div>
<div class="t sh" style="left:534px;top:151.500px">尺寸</div>
<div class="t lb" style="top:169.500px">(D) 直径</div>
<div class="t lb" style="top:185.300px">(ND) 颈部直径</div>
<div class="t lb" style="top:201px">(R1) 下半径</div>
<div class="t lb" style="top:216.800px">(R2) 上半径</div>
<div class="t lb" style="top:232.500px">(L) 长度</div>
<div class="t lb" style="top:248.300px">(FL) 刀刃长度</div>
<div class="t lb" style="top:264px">刀刃数</div>
<div class="a ib" style="top:166.500px;border-color:#c9a37a"><div class="a" style="left:1.700px;top:1px;width:46px;height:10.500px;background:#1768d2"></div><span class="num" style="color:#fff">100<i>.</i>00000</span></div>
<div class="a ib" style="top:182.300px"><span class="num">9<i>.</i>50000</span></div>
<div class="a ib" style="top:198px"><span class="num">0<i>.</i>00000</span></div>
<div class="a ib" style="top:213.800px"><span class="num">0<i>.</i>00000</span></div>
<div class="a ib" style="top:229.500px"><span class="num">25<i>.</i>00000</span></div>
<div class="a ib" style="top:245.300px"><span class="num">13<i>.</i>00000</span></div>
<div class="a ib" style="top:261px"><span class="numi">4</span></div>
<div class="a sep" style="top:280px"></div>
<!-- 描述 -->
<div class="a ar" style="left:523px;top:289.500px"></div>
<div class="t sh" style="left:534px;top:287px">描述</div>
<div class="a" style="left:525.200px;top:301.800px;width:174.600px;height:13.600px;background:#fff;border:1px solid #adadad"></div>
<div class="t" style="left:528.500px;top:305.300px;font-size:7.500px;color:#222">铣刀-T 型刀</div>
<div class="t lb" style="top:323.500px">材料 : HSM BULL NOSE TIALN COATED</div>
<div class="a" style="left:680px;top:317px;width:20px;height:20px;background:#fdfdfd;border:1px solid #adadad"></div>
<svg class="a" style="left:681px;top:318px" width="18" height="18" viewBox="0 0 18 18" fill="none" stroke="#444" stroke-width="0.900"><path d="M11.500 2.500a3.600 3.600 0 0 0-3.300 5l-5.500 5.500a1.500 1.500 0 0 0 2.200 2.200l5.500-5.500a3.600 3.600 0 0 0 4.900-3.500l-2.300 2.200l-2.200-0.700l-0.600-2.100l2.200-2.300a3.600 3.600 0 0 0-0.900-0.800z"/></svg>
<div class="a sep" style="top:342.300px"></div>
<!-- 编号 -->
<div class="a ar" style="left:523px;top:352px"></div>
<div class="t sh" style="left:534px;top:349.300px">编号</div>
<div class="t lb" style="top:367.700px">刀具号</div>
<div class="t lb" style="top:383.200px">补偿寄存器</div>
<div class="t lb" style="top:398.700px">刀具补偿寄存器</div>
<div class="a ib" style="top:364.100px"><span class="numi">0</span></div>
<div class="a ib" style="top:379.700px"><span class="numi">1</span></div>
<div class="a ib" style="top:395.300px"><span class="numi">1</span></div>
<div class="a sep" style="top:415px"></div>
<div class="a arr" style="left:525.500px;top:422.500px"></div><div class="t sh" style="left:533.300px;top:421px">偏置</div>
<div class="a sep" style="top:432px"></div>
<div class="a arr" style="left:525.500px;top:440px"></div><div class="t sh" style="left:533.300px;top:438.500px">信息</div>
<div class="a sep" style="top:449.300px"></div>
<div class="a arr" style="left:525.500px;top:456.800px"></div><div class="t sh" style="left:533.300px;top:455.200px">库</div>
<div class="a sep" style="top:466.300px"></div>
<div class="a" style="left:515.500px;top:472px;width:193.500px;height:1px;background:#dedede"></div>
<!-- 预览 -->
<div class="a ar" style="left:520.500px;top:480px"></div>
<div class="t sh" style="left:531.300px;top:477.300px">预览</div>
<div class="a" style="left:520.800px;top:498px;width:8.500px;height:8.500px;background:#1767c2;border-radius:1.500px"></div>
<svg class="a" style="left:520.800px;top:498px" width="8.500" height="8.500" viewBox="0 0 8.500 8.500" fill="none" stroke="#fff" stroke-width="1.200"><path d="M1.800 4.300l1.800 1.900l3.200-3.800"/></svg>
<div class="t" style="left:532.500px;top:498.300px;font-size:7.500px;color:#222">预览</div>
<div class="t" style="left:667px;top:498.300px;font-size:7.500px;color:#222">显示</div>
<div class="a" style="left:683px;top:492px;width:20.800px;height:20px;background:#fdfdfd;border:1px solid #adadad"></div>
<svg class="a" style="left:684px;top:493px" width="19" height="18" viewBox="0 0 19 18"><path d="M3 4.500l3-2.500l6.500 7l-3.500 3z" fill="#1f4fa8" stroke="#12306a" stroke-width="0.600"/><path d="M9 12l3.500-3l3 2.500c1.500 2-1.500 5-3.500 3.500z" fill="#2a66c8" stroke="#12306a" stroke-width="0.600"/><ellipse cx="14" cy="13.500" rx="1.400" ry="2.400" transform="rotate(-42 14 13.500)" fill="#f2d83a"/><path d="M4 5l2-1.700" stroke="#8ab0f0" stroke-width="0.800"/></svg>
<div class="a" style="left:515px;top:532px;width:194px;height:1px;background:#e2e2e2"></div>
<div class="a" style="left:609px;top:536.500px;width:0;height:0;border:3px solid transparent;border-bottom:3.500px solid #222"></div>
<div class="a" style="left:515px;top:545.500px;width:194px;height:1px;background:#e2e2e2"></div>
<div class="a" style="left:634.300px;top:551.300px;width:33.700px;height:15px;background:#0e5f88"></div>
<div class="t" style="left:643.500px;top:555px;font-size:7.500px;color:#fff">确定</div>
<div class="a" style="left:671.300px;top:551.300px;width:34.200px;height:15px;background:#f6f6f6;border:1px solid #5d8aa2"></div>
<div class="t" style="left:680.800px;top:555px;font-size:7.500px;color:#1b6084">取消</div>

</body>
</html>
